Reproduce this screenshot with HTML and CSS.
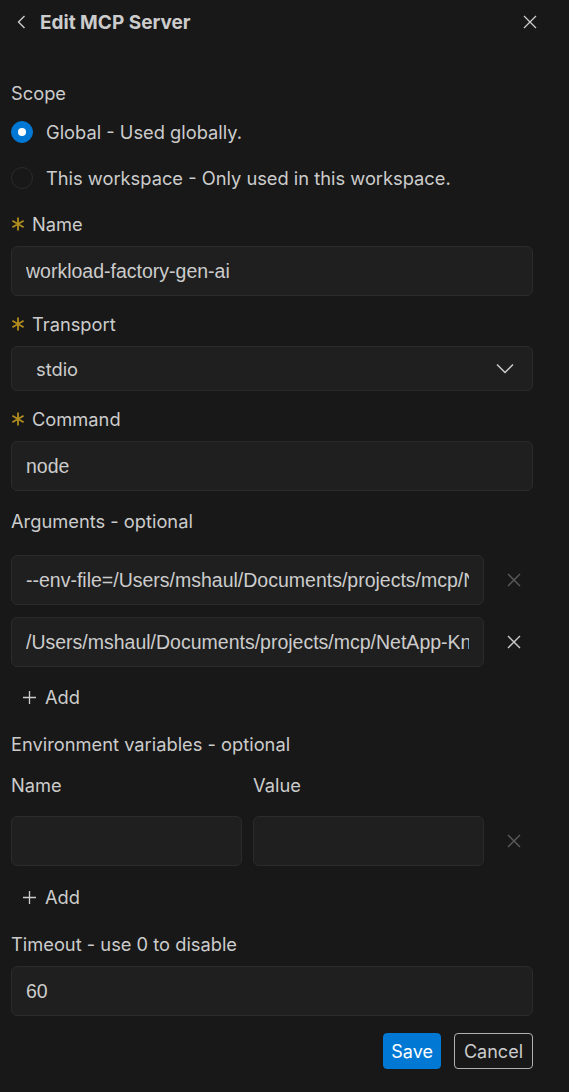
FILE: index.html
```html
<!DOCTYPE html>
<html lang="en">
<head>
    <meta charset="UTF-8">
    <meta name="viewport" content="width=device-width, initial-scale=1.0">
    <title>Edit MCP Server</title>
    <link rel="stylesheet" href="styles.css">
</head>
<body>
    <div class="header">
        <button class="icon-btn back-btn" title="Back">
            <svg width="12" height="14" viewBox="0 0 12 14"><path d="M8.5 1 L2.5 7 L8.5 13" fill="none" stroke="#cccccc" stroke-width="1.4"/></svg>
        </button>
        <h1 class="title">Edit MCP Server</h1>
        <button class="icon-btn close-btn" title="Close">
            <svg width="14" height="14" viewBox="0 0 14 14"><path d="M1 1 L13 13 M13 1 L1 13" fill="none" stroke="#cccccc" stroke-width="1.3"/></svg>
        </button>
    </div>

    <form class="server-form">
        <div class="section-label scope-label">Scope</div>
        <label class="radio-row">
            <span class="radio checked"></span>
            <span>Global - Used globally.</span>
        </label>
        <label class="radio-row">
            <span class="radio"></span>
            <span>This workspace - Only used in this workspace.</span>
        </label>

        <div class="field">
            <div class="field-label">
                <svg class="required" width="14" height="14" viewBox="0 0 14 14"><path d="M7 0.5 V13.5 M1.4 3.8 L12.6 10.2 M12.6 3.8 L1.4 10.2" fill="none" stroke="#b08d1e" stroke-width="1.8"/></svg>
                Name
            </div>
            <input type="text" class="text-input" value="workload-factory-gen-ai">
        </div>

        <div class="field">
            <div class="field-label">
                <svg class="required" width="14" height="14" viewBox="0 0 14 14"><path d="M7 0.5 V13.5 M1.4 3.8 L12.6 10.2 M12.6 3.8 L1.4 10.2" fill="none" stroke="#b08d1e" stroke-width="1.8"/></svg>
                Transport
            </div>
            <div class="select">
                <span>stdio</span>
                <svg width="18" height="11" viewBox="0 0 18 11"><path d="M1 1.5 L9 9.5 L17 1.5" fill="none" stroke="#cccccc" stroke-width="1.5"/></svg>
            </div>
        </div>

        <div class="field">
            <div class="field-label">
                <svg class="required" width="14" height="14" viewBox="0 0 14 14"><path d="M7 0.5 V13.5 M1.4 3.8 L12.6 10.2 M12.6 3.8 L1.4 10.2" fill="none" stroke="#b08d1e" stroke-width="1.8"/></svg>
                Command
            </div>
            <input type="text" class="text-input" value="node">
        </div>

        <div class="section-label args-label">Arguments - optional</div>
        <div class="list-row">
            <input type="text" class="text-input" value="--env-file=/Users/mshaul/Documents/projects/mcp/NetApp-Knowledge/.env">
            <button type="button" class="icon-btn remove-btn dim">
                <svg width="14" height="14" viewBox="0 0 14 14"><path d="M1 1 L13 13 M13 1 L1 13" fill="none" stroke="currentColor" stroke-width="1.4"/></svg>
            </button>
        </div>
        <div class="list-row">
            <input type="text" class="text-input" value="/Users/mshaul/Documents/projects/mcp/NetApp-Knowledge/build/index.js">
            <button type="button" class="icon-btn remove-btn">
                <svg width="14" height="14" viewBox="0 0 14 14"><path d="M1 1 L13 13 M13 1 L1 13" fill="none" stroke="currentColor" stroke-width="1.4"/></svg>
            </button>
        </div>
        <button type="button" class="add-btn">
            <svg width="15" height="15" viewBox="0 0 15 15"><path d="M7.5 1 V14 M1 7.5 H14" fill="none" stroke="#cccccc" stroke-width="1.3"/></svg>
            Add
        </button>

        <div class="section-label env-label">Environment variables - optional</div>
        <div class="env-grid env-head">
            <div>Name</div>
            <div>Value</div>
        </div>
        <div class="env-grid">
            <input type="text" class="text-input">
            <input type="text" class="text-input">
            <button type="button" class="icon-btn remove-btn dim">
                <svg width="14" height="14" viewBox="0 0 14 14"><path d="M1 1 L13 13 M13 1 L1 13" fill="none" stroke="currentColor" stroke-width="1.4"/></svg>
            </button>
        </div>
        <button type="button" class="add-btn">
            <svg width="15" height="15" viewBox="0 0 15 15"><path d="M7.5 1 V14 M1 7.5 H14" fill="none" stroke="#cccccc" stroke-width="1.3"/></svg>
            Add
        </button>

        <div class="section-label timeout-label">Timeout - use 0 to disable</div>
        <input type="text" class="text-input" value="60">

        <div class="actions">
            <button type="submit" class="btn primary">Save</button>
            <button type="button" class="btn secondary">Cancel</button>
        </div>
    </form>
</body>
</html>
```

FILE: styles.css
```css
body {
    font-family: Inter, "Noto Sans", sans-serif;
    font-size: 18.3px;
    color: #cccccc;
    background-color: #181818;
    margin: 0;
}
.header {
    display: flex;
    align-items: center;
    height: 44px;
    padding: 0 0 0 13px;
}
.title {
    font-size: 19px;
    font-weight: 700;
    margin: 0 0 0 9px;
    color: #cccccc;
    flex: 1;
}
.icon-btn {
    background: none;
    border: none;
    padding: 0;
    cursor: pointer;
    display: flex;
    align-items: center;
    justify-content: center;
    color: #cccccc;
}
.back-btn {
    width: 18px;
    height: 24px;
}
.close-btn {
    width: 24px;
    height: 24px;
    margin-right: 27px;
}
.server-form {
    width: 522px;
    padding: 0 0 0 11px;
}
.section-label, .field-label {
    line-height: 22px;
}
.scope-label {
    margin-top: 38px;
    margin-bottom: 5px;
}
.radio-row {
    display: flex;
    align-items: center;
    height: 46px;
    gap: 13px;
}
.radio {
    width: 22px;
    height: 22px;
    box-sizing: border-box;
    border-radius: 50%;
    border: 1px solid #2b2b2b;
    background: #181818;
    display: flex;
    align-items: center;
    justify-content: center;
}
.radio.checked {
    background: #0078d4;
    border-color: #0078d4;
}
.radio.checked::after {
    content: "";
    width: 8px;
    height: 8px;
    border-radius: 50%;
    background: #ffffff;
}
.field {
    margin-top: 12px;
}
.field + .field {
    margin-top: 17px;
}
.field-label {
    display: flex;
    align-items: center;
    margin-bottom: 11px;
}
.required {
    margin: 0 7px 0 0;
}
.text-input {
    width: 100%;
    height: 50px;
    box-sizing: border-box;
    background: #1f1f1f;
    border: 1px solid #2b2b2b;
    border-radius: 6px;
    color: #cccccc;
    font-family: "Liberation Sans", Arial, sans-serif;
    font-size: 19.5px;
    padding: 0 14px;
    outline: none;
}
.select {
    display: flex;
    align-items: center;
    justify-content: space-between;
    height: 45px;
    box-sizing: border-box;
    background: #1f1f1f;
    border: 1px solid #2b2b2b;
    border-radius: 6px;
    padding: 0 18px 0 24px;
}
.args-label {
    margin-top: 19px;
    margin-bottom: 23px;
}
.list-row {
    display: grid;
    grid-template-columns: 1fr 38px;
    column-gap: 11px;
    margin-bottom: 12px;
}
.remove-btn {
    height: 100%;
}
.remove-btn.dim {
    color: #5a5a5a;
}
.add-btn {
    display: flex;
    align-items: center;
    gap: 8px;
    background: none;
    border: none;
    color: #cccccc;
    font-family: inherit;
    font-size: 18.3px;
    height: 30px;
    padding: 0 0 0 11px;
    margin-top: 15px;
    cursor: pointer;
}
.env-label {
    margin-top: 21px;
}
.env-grid {
    display: grid;
    grid-template-columns: 1fr 1fr 38px;
    column-gap: 11px;
    margin-bottom: 16px;
}
.env-head {
    margin-top: 19px;
    margin-bottom: 20px;
    line-height: 22px;
}
.timeout-label {
    margin-top: 21px;
    margin-bottom: 11px;
}
.actions {
    display: flex;
    justify-content: flex-end;
    gap: 13px;
    margin-top: 17px;
}
.btn {
    height: 36px;
    font-family: inherit;
    font-size: 18px;
    border-radius: 4px;
    padding: 0 7px;
    cursor: pointer;
}
.primary {
    background: #0078d4;
    border: 1px solid #0078d4;
    color: #ffffff;
}
.secondary {
    background: none;
    border: 1px solid #b0b0b0;
    color: #cccccc;
    padding: 0 9px;
}
```
